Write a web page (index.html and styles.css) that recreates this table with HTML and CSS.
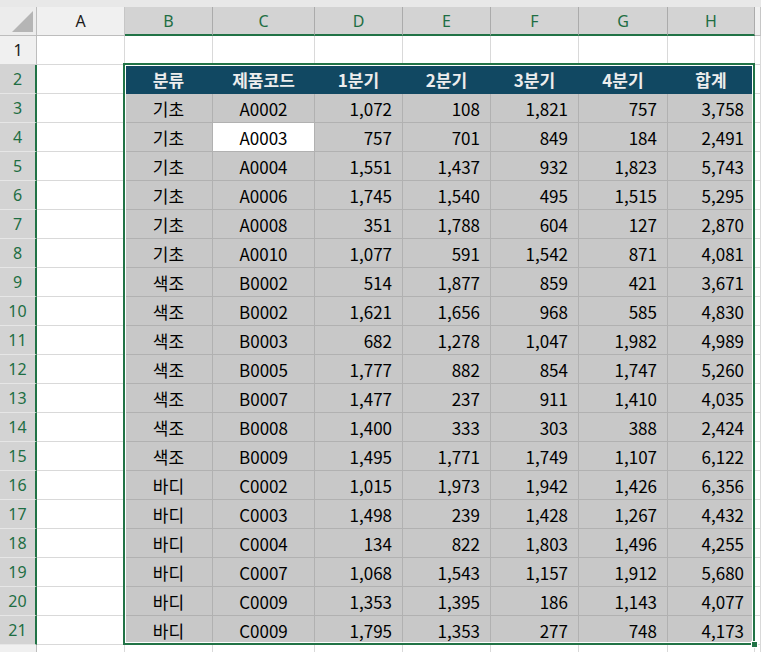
FILE: index.html
```html
<!DOCTYPE html>
<html lang="ko">
<head>
<meta charset="utf-8">
<title>Sheet</title>
<link rel="stylesheet" href="styles.css">
</head>
<body>
<div class="sheet">
  <div class="strip"></div>
  <div class="row hdr">
    <div class="corner"><svg width="36" height="28" viewBox="0 0 36 28"><polygon points="12,25 33,25 33,4" fill="#b5b5b5"/></svg></div>
    <div class="ch">A</div><div class="ch sel">B</div><div class="ch sel">C</div><div class="ch sel">D</div><div class="ch sel">E</div><div class="ch sel">F</div><div class="ch sel">G</div><div class="ch sel">H</div><div class="ch"></div>
  </div>
  <div class="row"><div class="rh">1</div><div class="c"></div><div class="c"></div><div class="c"></div><div class="c"></div><div class="c"></div><div class="c"></div><div class="c"></div><div class="c"></div><div class="c"></div></div>
  <div class="row"><div class="rh sel">2</div><div class="c"></div><div class="t">분류</div><div class="t">제품코드</div><div class="t">1분기</div><div class="t">2분기</div><div class="t">3분기</div><div class="t">4분기</div><div class="t">합계</div><div class="c"></div></div>
  <div class="row"><div class="rh sel">3</div><div class="c"></div><div class="d m">기초</div><div class="d m">A0002</div><div class="d n">1,072</div><div class="d n">108</div><div class="d n">1,821</div><div class="d n">757</div><div class="d n">3,758</div><div class="c"></div></div>
  <div class="row"><div class="rh sel">4</div><div class="c"></div><div class="d m">기초</div><div class="d m act">A0003</div><div class="d n">757</div><div class="d n">701</div><div class="d n">849</div><div class="d n">184</div><div class="d n">2,491</div><div class="c"></div></div>
  <div class="row"><div class="rh sel">5</div><div class="c"></div><div class="d m">기초</div><div class="d m">A0004</div><div class="d n">1,551</div><div class="d n">1,437</div><div class="d n">932</div><div class="d n">1,823</div><div class="d n">5,743</div><div class="c"></div></div>
  <div class="row"><div class="rh sel">6</div><div class="c"></div><div class="d m">기초</div><div class="d m">A0006</div><div class="d n">1,745</div><div class="d n">1,540</div><div class="d n">495</div><div class="d n">1,515</div><div class="d n">5,295</div><div class="c"></div></div>
  <div class="row"><div class="rh sel">7</div><div class="c"></div><div class="d m">기초</div><div class="d m">A0008</div><div class="d n">351</div><div class="d n">1,788</div><div class="d n">604</div><div class="d n">127</div><div class="d n">2,870</div><div class="c"></div></div>
  <div class="row"><div class="rh sel">8</div><div class="c"></div><div class="d m">기초</div><div class="d m">A0010</div><div class="d n">1,077</div><div class="d n">591</div><div class="d n">1,542</div><div class="d n">871</div><div class="d n">4,081</div><div class="c"></div></div>
  <div class="row"><div class="rh sel">9</div><div class="c"></div><div class="d m">색조</div><div class="d m">B0002</div><div class="d n">514</div><div class="d n">1,877</div><div class="d n">859</div><div class="d n">421</div><div class="d n">3,671</div><div class="c"></div></div>
  <div class="row"><div class="rh sel">10</div><div class="c"></div><div class="d m">색조</div><div class="d m">B0002</div><div class="d n">1,621</div><div class="d n">1,656</div><div class="d n">968</div><div class="d n">585</div><div class="d n">4,830</div><div class="c"></div></div>
  <div class="row"><div class="rh sel">11</div><div class="c"></div><div class="d m">색조</div><div class="d m">B0003</div><div class="d n">682</div><div class="d n">1,278</div><div class="d n">1,047</div><div class="d n">1,982</div><div class="d n">4,989</div><div class="c"></div></div>
  <div class="row"><div class="rh sel">12</div><div class="c"></div><div class="d m">색조</div><div class="d m">B0005</div><div class="d n">1,777</div><div class="d n">882</div><div class="d n">854</div><div class="d n">1,747</div><div class="d n">5,260</div><div class="c"></div></div>
  <div class="row"><div class="rh sel">13</div><div class="c"></div><div class="d m">색조</div><div class="d m">B0007</div><div class="d n">1,477</div><div class="d n">237</div><div class="d n">911</div><div class="d n">1,410</div><div class="d n">4,035</div><div class="c"></div></div>
  <div class="row"><div class="rh sel">14</div><div class="c"></div><div class="d m">색조</div><div class="d m">B0008</div><div class="d n">1,400</div><div class="d n">333</div><div class="d n">303</div><div class="d n">388</div><div class="d n">2,424</div><div class="c"></div></div>
  <div class="row"><div class="rh sel">15</div><div class="c"></div><div class="d m">색조</div><div class="d m">B0009</div><div class="d n">1,495</div><div class="d n">1,771</div><div class="d n">1,749</div><div class="d n">1,107</div><div class="d n">6,122</div><div class="c"></div></div>
  <div class="row"><div class="rh sel">16</div><div class="c"></div><div class="d m">바디</div><div class="d m">C0002</div><div class="d n">1,015</div><div class="d n">1,973</div><div class="d n">1,942</div><div class="d n">1,426</div><div class="d n">6,356</div><div class="c"></div></div>
  <div class="row"><div class="rh sel">17</div><div class="c"></div><div class="d m">바디</div><div class="d m">C0003</div><div class="d n">1,498</div><div class="d n">239</div><div class="d n">1,428</div><div class="d n">1,267</div><div class="d n">4,432</div><div class="c"></div></div>
  <div class="row"><div class="rh sel">18</div><div class="c"></div><div class="d m">바디</div><div class="d m">C0004</div><div class="d n">134</div><div class="d n">822</div><div class="d n">1,803</div><div class="d n">1,496</div><div class="d n">4,255</div><div class="c"></div></div>
  <div class="row"><div class="rh sel">19</div><div class="c"></div><div class="d m">바디</div><div class="d m">C0007</div><div class="d n">1,068</div><div class="d n">1,543</div><div class="d n">1,157</div><div class="d n">1,912</div><div class="d n">5,680</div><div class="c"></div></div>
  <div class="row"><div class="rh sel">20</div><div class="c"></div><div class="d m">바디</div><div class="d m">C0009</div><div class="d n">1,353</div><div class="d n">1,395</div><div class="d n">186</div><div class="d n">1,143</div><div class="d n">4,077</div><div class="c"></div></div>
  <div class="row"><div class="rh sel">21</div><div class="c"></div><div class="d m">바디</div><div class="d m">C0009</div><div class="d n">1,795</div><div class="d n">1,353</div><div class="d n">277</div><div class="d n">748</div><div class="d n">4,173</div><div class="c"></div></div>
  <div class="row"><div class="rh"></div><div class="c"></div><div class="c"></div><div class="c"></div><div class="c"></div><div class="c"></div><div class="c"></div><div class="c"></div><div class="c"></div><div class="c"></div></div>
  <div class="selection"></div>
  <div class="handle"></div>
</div>
</body>
</html>
```

FILE: styles.css
```css
html, body {
  margin: 0;
  padding: 0;
  background: #ffffff;
  overflow: hidden;
}

.sheet {
  position: relative;
  width: 761px;
  height: 652px;
  overflow: hidden;
  font-family: "Noto Sans CJK KR", "Noto Sans", sans-serif;
  font-size: 17px;
  color: #000000;
}

.strip {
  height: 7px;
  background: #e8e8e8;
}

.row {
  display: grid;
  grid-template-columns: 37px 88px 88px 102px 88px 88px 88px 89px 87px 1fr;
  height: 29px;
}

.row > div {
  box-sizing: border-box;
  display: flex;
  align-items: center;
  overflow: hidden;
  white-space: nowrap;
}

.corner {
  background: #ececec;
  border-right: 1px solid #bdbdbd;
  border-bottom: 1px solid #bdbdbd;
  align-items: flex-start !important;
}

.corner svg {
  display: block;
}

.ch {
  background: #f0f0f0;
  border-right: 1px solid #c6c6c6;
  border-bottom: 1px solid #bdbdbd;
  justify-content: center;
  font-family: "Noto Sans", sans-serif;
  font-size: 16px;
  color: #1a1a1a;
}

.ch.sel {
  background: #d3d3d3;
  color: #1e6e43;
  border-right-color: #ababab;
  border-bottom: 2px solid #217346;
}

.rh {
  background: #f0f0f0;
  border-right: 1px solid #bdbdbd;
  border-bottom: 1px solid #d4d4d4;
  justify-content: center;
  font-family: "Noto Sans", sans-serif;
  font-size: 16px;
  color: #1a1a1a;
}

.rh.sel {
  background: #d3d3d3;
  color: #1e6e43;
  border-right: 2px solid #217346;
  border-bottom-color: #e6e6e6;
}

.c {
  background: #ffffff;
  border-right: 1px solid #d9d9d9;
  border-bottom: 1px solid #d9d9d9;
}

.t {
  background: #114862;
  border-right: 1px solid #114862;
  border-bottom: 1px solid #114862;
  justify-content: center;
  font-weight: 700;
  color: #ededed;
}

.d {
  background: #c8c8c8;
  border-right: 1px solid #b1b1b1;
  border-bottom: 1px solid #b1b1b1;
}

.m {
  justify-content: center;
}

.n {
  justify-content: flex-end;
  padding-right: 10px;
}

.d.act {
  background: #ffffff;
}

.selection {
  position: absolute;
  left: 123px;
  top: 63px;
  width: 632px;
  height: 582px;
  box-sizing: border-box;
  border: 2px solid #217346;
  box-shadow: inset 0 0 0 1px #ffffff;
  pointer-events: none;
}

.handle {
  position: absolute;
  left: 751px;
  top: 641px;
  width: 7px;
  height: 7px;
  box-sizing: border-box;
  background: #217346;
  border: 1px solid #ffffff;
}
```
